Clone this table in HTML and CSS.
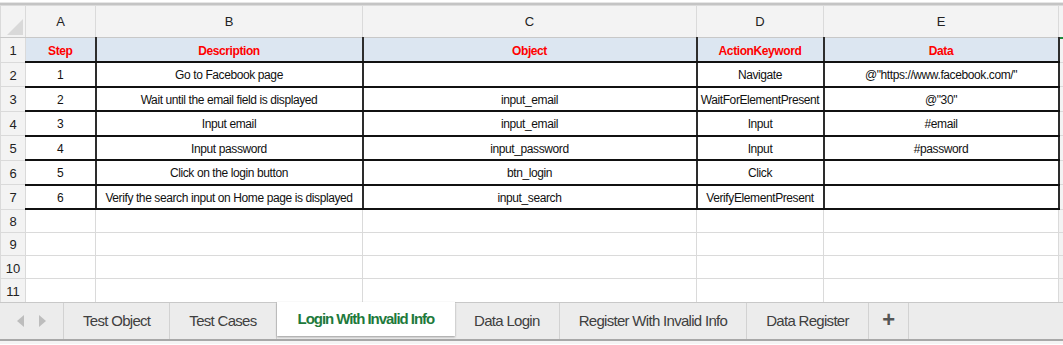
FILE: index.html
```html
<!DOCTYPE html>
<html lang="en">
<head>
    <meta charset="UTF-8">
    <title>Login With Invalid Info</title>
    <link rel="stylesheet" href="styles.css">
</head>
<body>
    <div class="sheet">
        <div class="topline"></div>
        <div class="grid-wrap">
            <table class="grid">
                <colgroup>
                    <col style="width: 25px">
                    <col style="width: 70px">
                    <col style="width: 267px">
                    <col style="width: 334px">
                    <col style="width: 127px">
                    <col style="width: 235px">
                    <col style="width: 5px">
                </colgroup>
                <thead>
                    <tr>
                        <th class="corner">
                            <svg width="16" height="16" viewBox="0 0 16 16"><polygon points="16,0 16,16 0,16" fill="#d9d9d9"/></svg>
                        </th>
                        <th>A</th>
                        <th>B</th>
                        <th>C</th>
                        <th>D</th>
                        <th>E</th>
                        <th class="fill"></th>
                    </tr>
                </thead>
                <tbody>
                    <tr class="r head">
                        <td class="rn">1</td>
                        <td class="d">Step</td>
                        <td class="d">Description</td>
                        <td class="d">Object</td>
                        <td class="d">ActionKeyword</td>
                        <td class="d">Data</td>
                        <td class="fill"></td>
                    </tr>
                    <tr class="r">
                        <td class="rn">2</td>
                        <td class="d">1</td>
                        <td class="d">Go to Facebook page</td>
                        <td class="d"></td>
                        <td class="d">Navigate</td>
                        <td class="d">@"https://www.facebook.com/"</td>
                        <td class="fill"></td>
                    </tr>
                    <tr class="r">
                        <td class="rn">3</td>
                        <td class="d">2</td>
                        <td class="d">Wait until the email field is displayed</td>
                        <td class="d">input_email</td>
                        <td class="d">WaitForElementPresent</td>
                        <td class="d">@"30"</td>
                        <td class="fill"></td>
                    </tr>
                    <tr class="r">
                        <td class="rn">4</td>
                        <td class="d">3</td>
                        <td class="d">Input email</td>
                        <td class="d">input_email</td>
                        <td class="d">Input</td>
                        <td class="d">#email</td>
                        <td class="fill"></td>
                    </tr>
                    <tr class="r">
                        <td class="rn">5</td>
                        <td class="d">4</td>
                        <td class="d">Input password</td>
                        <td class="d">input_password</td>
                        <td class="d">Input</td>
                        <td class="d">#password</td>
                        <td class="fill"></td>
                    </tr>
                    <tr class="r">
                        <td class="rn">6</td>
                        <td class="d">5</td>
                        <td class="d">Click on the login button</td>
                        <td class="d">btn_login</td>
                        <td class="d">Click</td>
                        <td class="d"></td>
                        <td class="fill"></td>
                    </tr>
                    <tr class="r">
                        <td class="rn">7</td>
                        <td class="d">6</td>
                        <td class="d">Verify the search input on Home page is displayed</td>
                        <td class="d">input_search</td>
                        <td class="d">VerifyElementPresent</td>
                        <td class="d"></td>
                        <td class="fill"></td>
                    </tr>
                    <tr class="e"><td class="rn">8</td><td></td><td></td><td></td><td></td><td></td><td class="fill"></td></tr>
                    <tr class="e"><td class="rn">9</td><td></td><td></td><td></td><td></td><td></td><td class="fill"></td></tr>
                    <tr class="e"><td class="rn">10</td><td></td><td></td><td></td><td></td><td></td><td class="fill"></td></tr>
                    <tr class="e"><td class="rn">11</td><td></td><td></td><td></td><td></td><td></td><td class="fill"></td></tr>
                </tbody>
            </table>
        </div>

        <div class="tabbar">
            <div class="nav">
                <span class="arrow left"></span>
                <span class="arrow right"></span>
            </div>
            <div class="tab">Test Object</div>
            <div class="tab">Test Cases</div>
            <div class="tab active">Login With Invalid Info</div>
            <div class="tab">Data Login</div>
            <div class="tab">Register With Invalid Info</div>
            <div class="tab">Data Register</div>
            <div class="tab add">+</div>
        </div>
        <div class="bottomline"></div>
    </div>
</body>
</html>
```

FILE: styles.css
```css
* {
    margin: 0;
    padding: 0;
    box-sizing: border-box;
}

body {
    background-color: #fff;
    font-family: "Liberation Sans", Arial, sans-serif;
    color: #111;
}

.sheet {
    width: 1063px;
    height: 345px;
    overflow: hidden;
    background: #fff;
}

.topline {
    height: 5px;
    border-top: 2px solid #fff;
    border-bottom: 2px solid #c4c4c4;
    background: #e6e6e6;
}

.grid-wrap {
    height: 297px;
    overflow: hidden;
}

.grid {
    width: 1063px;
    table-layout: fixed;
    border-collapse: collapse;
}

.grid th,
.grid td {
    border: 1px solid #dadada;
    text-align: center;
    white-space: nowrap;
    overflow: hidden;
}

.grid thead th {
    height: 32px;
    background: #f3f3f3;
    font-weight: normal;
    font-size: 13px;
    color: #222;
    border-bottom-color: #c8c8c8;
}

.grid th.corner {
    position: relative;
}

.grid th.corner svg {
    position: absolute;
    right: 2px;
    bottom: 2px;
}

.grid tr.r {
    height: 24.5px;
}

.grid tr.e {
    height: 23.3px;
}

.grid td {
    font-size: 12px;
    letter-spacing: -0.4px;
    padding-top: 2px;
}

.grid td.rn {
    background: #f3f3f3;
    font-size: 13px;
    letter-spacing: 0;
    color: #222;
}

.grid td.fill {
    background: #f3f3f3;
}

.grid td.d {
    border-right: 2px solid #2d2d2d;
    border-bottom: 2px solid #111;
}

.grid tr.head td.d {
    background: #dce6f1;
    color: #ff0000;
    font-weight: bold;
}

.grid tr.head td.fill {
    border-top: 2px solid #1d8a3c;
}

.tabbar {
    display: flex;
    height: 39px;
    background: #ececec;
    border-top: 1px solid #c8c8c8;
    border-bottom: 2px solid #a8a8a8;
}

.nav {
    width: 64px;
    display: flex;
    align-items: center;
    justify-content: center;
    gap: 15px;
    border-right: 1px solid #d2d2d2;
}

.arrow {
    width: 0;
    height: 0;
    border-top: 6px solid transparent;
    border-bottom: 6px solid transparent;
}

.arrow.left {
    border-right: 7px solid #bdbdbd;
}

.arrow.right {
    border-left: 7px solid #bdbdbd;
}

.tab {
    display: flex;
    align-items: center;
    padding: 0 19px 2px;
    font-size: 15px;
    letter-spacing: -0.7px;
    color: #404040;
    border-right: 1px solid #d2d2d2;
}

.tab.active {
    background: #fff;
    color: #1e7a3c;
    font-weight: bold;
    letter-spacing: -1.05px;
    padding: 0 21px 2px;
    margin-bottom: 3px;
    margin-top: -1px;
    border-right: none;
    box-shadow: 0 1px 2px rgba(0, 0, 0, 0.35);
}

.tab.add {
    width: 40px;
    justify-content: center;
    padding: 0 0 2px;
    font-size: 22px;
    font-weight: bold;
    color: #555;
}

.bottomline {
    height: 3px;
    background: #f4f4f4;
}
```
